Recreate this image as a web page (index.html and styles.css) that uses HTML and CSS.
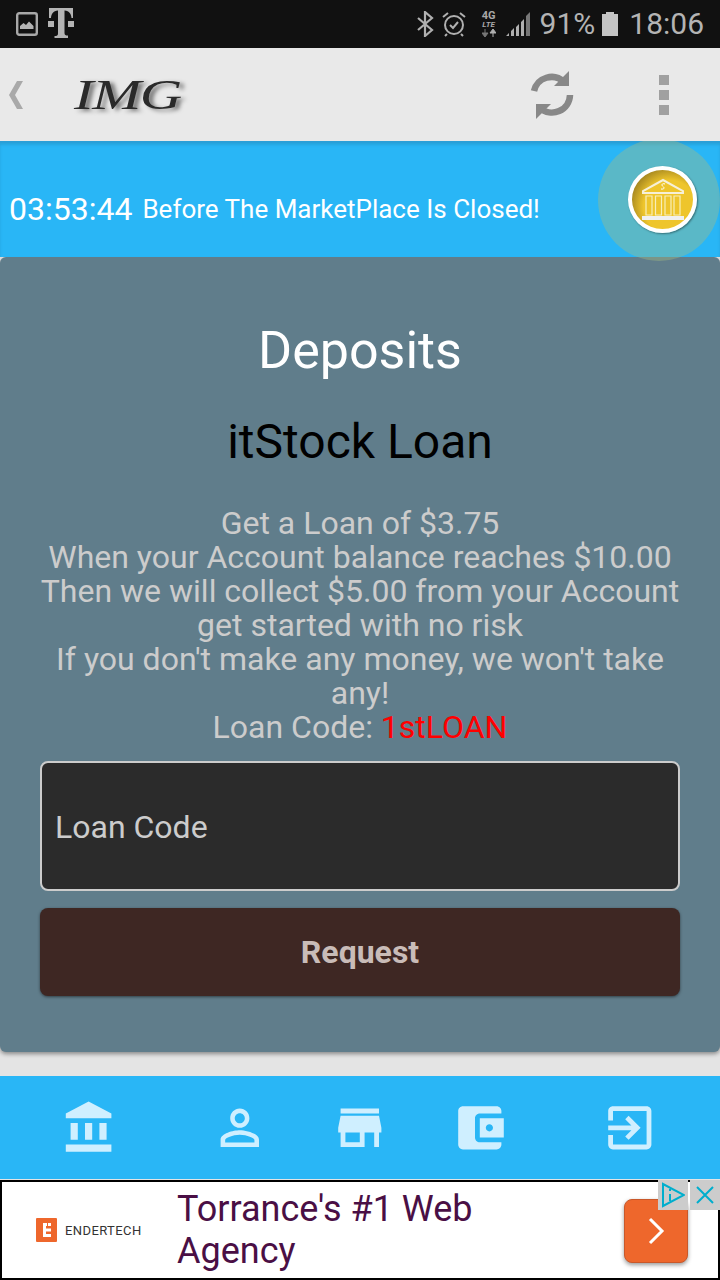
FILE: index.html
```html
<!DOCTYPE html>
<html lang="en">
<head>
    <meta charset="UTF-8">
    <meta name="viewport" content="width=device-width, initial-scale=1.0">
    <title>Deposits - itStock Loan</title>
    <link rel="stylesheet" href="styles.css">
</head>
<body>
    <div class="status-bar">
        <div class="status-left">
            <svg class="status-image" viewBox="0 0 22 24" width="22" height="24">
                <rect x="1.2" y="1.2" width="19.6" height="21.6" rx="2" fill="none" stroke="#a8a8a8" stroke-width="2.4"/>
                <path d="M4 17v-3l3.500-3 2.500 2 3-3.500 4.500 4.500v3z" fill="#b4b4b4"/>
            </svg>
            <svg class="status-t" viewBox="0 0 26 32" width="26" height="32">
                <path d="M1 1h24v10h-1.500c-.3-4-2-7-7-7.500v22.500c0 2 1 2.500 3.500 2.500v2.500H6.500V29c2.500 0 3.500-.5 3.500-2.500V3.500c-5 .5-6.700 3.500-7 7.500H1z" fill="#b4b4b4"/>
                <rect x="0" y="14" width="6" height="6" fill="#b4b4b4"/>
                <rect x="20" y="14" width="6" height="6" fill="#b4b4b4"/>
            </svg>
        </div>
        <div class="status-right">
            <svg viewBox="0 0 18 26" width="18" height="26">
                <path d="M2 7l14 12-7 6V1l7 6L2 19" fill="none" stroke="#b0b0b0" stroke-width="2.200"/>
            </svg>
            <svg class="status-alarm" viewBox="0 0 24 26" width="24" height="26">
                <circle cx="12" cy="14" r="9" fill="none" stroke="#b0b0b0" stroke-width="2"/>
                <path d="M8 14l3 3 5-6M1 6l5-4M23 6l-5-4M5 23l-2 2M19 23l2 2" fill="none" stroke="#b0b0b0" stroke-width="2"/>
            </svg>
            <div class="status-net">
                <span class="net-top">4G</span>
                <span class="net-mid">LTE</span>
                <svg viewBox="0 0 14 8" width="14" height="8">
                    <path d="M3 0v4M0 4h6L3 8z" fill="#777" stroke="#777" stroke-width="1"/>
                    <path d="M11 8V4M8 4h6l-3-4z" fill="#b0b0b0" stroke="#b0b0b0" stroke-width="1"/>
                </svg>
            </div>
            <svg class="status-signal" viewBox="0 0 24 24" width="24" height="24">
                <path d="M0 24h3v-3zM5 24h3v-8l-3 3zM10 24h3V12l-3 3zM15 24h3V7l-3 3z" fill="#b0b0b0"/>
                <path d="M20 24h4V0l-4 4z" fill="#777"/>
            </svg>
            <span class="status-text">91%</span>
            <svg class="status-battery" viewBox="0 0 16 24" width="16" height="24">
                <path d="M4 2V0h8v2h4v22H0V2z" fill="#c4c4c4"/>
            </svg>
            <span class="status-text status-time">18:06</span>
        </div>
    </div>

    <header class="app-bar">
        <svg class="back" viewBox="0 0 16 28" width="16" height="28">
            <path d="M9 0h6L7 14l8 14H9L1 14z" fill="#a9a9a9"/>
        </svg>
        <span class="logo">IMG</span>
        <svg class="refresh" viewBox="0 0 46 48" width="46" height="48">
            <path d="M5 20a18 18 0 0 1 30-9" fill="none" stroke="#888" stroke-width="6.500"/>
            <path d="M40 0v15H25z" fill="#888"/>
            <path d="M41 24a18 18 0 0 1-30 13" fill="none" stroke="#888" stroke-width="6.500"/>
            <path d="M7 48V33h15z" fill="#888"/>
        </svg>
        <div class="menu-dots">
            <span></span>
            <span></span>
            <span></span>
        </div>
    </header>

    <div class="ticker">
        <span class="ticker-time">03:53:44</span>
        <span class="ticker-text">Before The MarketPlace Is Closed!</span>
        <div class="ripple"></div>
        <div class="coin">
            <svg viewBox="0 0 44 44" width="44" height="44">
                <path d="M22 2L42 13v2H2v-2z" fill="#eec52c" stroke="#f6f0d8" stroke-width="2"/>
                <path d="M24 6c-3-1-4 1-2 2.500s1 3-2 2.500" fill="none" stroke="#fff" stroke-width="1"/>
                <path d="M5 18h6v19H5zM14.500 18h6v19h-6zM24 18h6v19h-6zM33 18h6v19h-6z" fill="#eec52c" stroke="#f8eeb8" stroke-width="1.200"/>
                <path d="M1 38h42v4H1z" fill="#f0f0f0"/>
            </svg>
        </div>
    </div>

    <main class="card">
        <h1>Deposits</h1>
        <h2>itStock Loan</h2>
        <p class="loan-info">
            Get a Loan of $3.75<br>
            When your Account balance reaches $10.00<br>
            Then we will collect $5.00 from your Account<br>
            get started with no risk<br>
            If you don't make any money, we won't take any!<br>
            Loan Code: <span class="code">1stLOAN</span>
        </p>
        <input class="code-input" type="text" placeholder="Loan Code">
        <button class="btn-request">Request</button>
    </main>

    <nav class="tabs">
        <div class="tab">
            <svg viewBox="0 0 24 24"><path d="M4 10v7h3v-7H4zm6 0v7h3v-7h-3zM2 22h19v-3H2v3zm14-12v7h3v-7h-3zm-4.500-9L2 6v2h19V6l-9.500-5z"/></svg>
        </div>
        <div class="tab">
            <svg viewBox="0 0 24 24"><path d="M12 5.900c1.160 0 2.100.94 2.100 2.100s-.94 2.100-2.100 2.100S9.900 9.160 9.900 8s.94-2.100 2.100-2.100m0 9c2.970 0 6.100 1.460 6.100 2.100v1.100H5.900V17c0-.64 3.130-2.100 6.100-2.100M12 4C9.790 4 8 5.790 8 8s1.790 4 4 4 4-1.790 4-4-1.790-4-4-4zm0 9c-2.670 0-8 1.340-8 4v3h16v-3c0-2.660-5.330-4-8-4z"/></svg>
        </div>
        <div class="tab">
            <svg viewBox="0 0 24 24"><path d="M20 4H4v2h16V4zm1 10v-2l-1-5H4l-1 5v2h1v6h10v-6h4v6h2v-6h1zm-9 4H6v-4h6v4z"/></svg>
        </div>
        <div class="tab">
            <svg viewBox="0 0 24 24"><path d="M21 18v1c0 1.100-.89 2-2 2H5c-1.110 0-2-.9-2-2V5c0-1.100.89-2 2-2h14c1.100 0 2 .9 2 2v1h-9c-1.110 0-2 .9-2 2v8c0 1.100.89 2 2 2h9zm-9-2h10V8H12v8zm4-2.500c-.83 0-1.500-.67-1.500-1.500s.67-1.500 1.500-1.500 1.500.67 1.500 1.500-.67 1.500-1.500 1.500z"/></svg>
        </div>
        <div class="tab">
            <svg viewBox="0 0 24 24"><path d="M10.090 15.590L11.500 17l5-5-5-5-1.410 1.410L12.670 11H3v2h9.670l-2.580 2.590zM19 3H5c-1.110 0-2 .9-2 2v4h2V5h14v14H5v-4H3v4c0 1.100.89 2 2 2h14c1.100 0 2-.9 2-2V5c0-1.100-.9-2-2-2z"/></svg>
        </div>
    </nav>

    <div class="ad">
        <div class="ad-brand">
            <svg viewBox="0 0 21 24" width="21" height="24">
                <rect width="21" height="24" rx="1" fill="#ee672c"/>
                <path d="M7 5h3v14H7zM10 5h1v3h-1zM12 5h3v3h-3zM10 10.500h5v3h-5zM10 16h5v3h-5z" fill="#fff"/>
            </svg>
            <span>ENDERTECH</span>
        </div>
        <div class="ad-headline">Torrance's #1 Web Agency</div>
        <div class="ad-go">
            <svg viewBox="0 0 18 28" width="18" height="28">
                <path d="M3 2l12 12L3 26" fill="none" stroke="#fff" stroke-width="3"/>
            </svg>
        </div>
        <div class="ad-controls">
            <div class="ad-control">
                <svg viewBox="0 0 24 26" width="24" height="26">
                    <path d="M2 2v22l21-11z" fill="none" stroke="#00aecd" stroke-width="2"/>
                    <path d="M9 12v7M9 7v2" stroke="#00aecd" stroke-width="2"/>
                </svg>
            </div>
            <div class="ad-control">
                <svg viewBox="0 0 20 20" width="20" height="20">
                    <path d="M2 2l16 16M18 2L2 18" stroke="#00aecd" stroke-width="2"/>
                </svg>
            </div>
        </div>
    </div>
</body>
</html>
```

FILE: styles.css
```css
* {
    box-sizing: border-box;
}
body {
    position: relative;
    width: 720px;
    height: 1280px;
    margin: 0;
    overflow: hidden;
    font-family: Roboto, "Liberation Sans", sans-serif;
    background-color: #e4e4e4;
}
.status-bar {
    display: flex;
    justify-content: space-between;
    align-items: center;
    height: 48px;
    padding: 0 16px;
    background-color: #111;
}
.status-left {
    display: flex;
    align-items: center;
    gap: 10px;
}
.status-t {
    margin-top: -2px;
}
.status-right {
    display: flex;
    align-items: center;
}
.status-alarm {
    margin-left: 8px;
}
.status-net {
    display: flex;
    flex-direction: column;
    align-items: center;
    width: 18px;
    margin-left: 14px;
    color: #a8a8a8;
    font-weight: 700;
    line-height: 9px;
}
.net-top {
    font-size: 11px;
}
.net-mid {
    font-size: 8px;
    font-style: italic;
}
.status-signal {
    margin-left: 8px;
}
.status-text {
    margin-left: 10px;
    color: #b4b4b4;
    font-size: 30px;
    line-height: 48px;
}
.status-battery {
    margin-left: 7px;
}
.status-time {
    margin-left: 11px;
}
.app-bar {
    position: relative;
    display: flex;
    align-items: center;
    height: 93px;
    padding-left: 8px;
    background-color: #e9e9e9;
    z-index: 3;
}
.back {
    flex-shrink: 0;
}
.logo {
    width: 84px;
    margin-left: 50px;
    color: #2a2a2a;
    font-family: "Liberation Serif", serif;
    font-size: 42px;
    font-style: italic;
    letter-spacing: -1px;
    text-shadow: 3px 2px 4px rgba(0, 0, 0, 0.5);
    transform: scaleX(1.4);
    transform-origin: left;
}
.refresh {
    flex-shrink: 0;
    margin-left: 371px;
}
.menu-dots {
    display: flex;
    flex-direction: column;
    gap: 5px;
    margin-left: 84px;
}
.menu-dots span {
    width: 10px;
    height: 10px;
    background-color: #a0a0a0;
}
.ticker {
    position: relative;
    display: flex;
    align-items: center;
    gap: 10px;
    height: 116px;
    padding: 18px 0 0 9px;
    border-top: 2px solid #2a9fd8;
    background-color: #29b6f6;
    box-shadow: inset 0 2px 3px rgba(0, 0, 0, 0.1);
    color: #fff;
}
.ticker-time {
    font-size: 32px;
}
.ticker-text {
    font-size: 26px;
}
.ripple {
    position: absolute;
    top: -4px;
    left: 598px;
    width: 122px;
    height: 122px;
    border-radius: 50%;
    background-color: rgba(166, 187, 131, 0.4);
    z-index: 2;
}
.coin {
    position: absolute;
    top: 23px;
    left: 628px;
    display: flex;
    justify-content: center;
    align-items: center;
    width: 69px;
    height: 67px;
    border: 4px solid #fff;
    border-radius: 50%;
    background: radial-gradient(circle at 62% 62%, #eec52c 50%, #a1831f 78%);
    box-shadow: 1px 1px 2px rgba(0, 0, 0, 0.4);
    z-index: 3;
}
.card {
    height: 795px;
    padding: 66px 40px 0;
    border-radius: 6px;
    background-color: #607d8b;
    box-shadow: 0 2px 4px rgba(0, 0, 0, 0.4);
    text-align: center;
}
h1 {
    margin: 0;
    color: #fff;
    font-size: 52px;
    font-weight: 400;
    line-height: 56px;
}
h2 {
    margin: 35px 0 0;
    color: #000;
    font-size: 48px;
    font-weight: 400;
    line-height: 56px;
}
.loan-info {
    margin: 36px 0 0;
    color: #ccc;
    font-size: 32px;
    line-height: 34px;
}
.code {
    color: #f00;
}
.code-input {
    display: block;
    width: 100%;
    height: 130px;
    margin-top: 17px;
    padding: 2px 13px 0;
    border: 2px solid #ccc;
    border-radius: 8px;
    background-color: #2b2b2b;
    color: #ccc;
    font-family: inherit;
    font-size: 32px;
}
.code-input::placeholder {
    color: #ccc;
    opacity: 1;
}
.btn-request {
    display: block;
    width: 100%;
    height: 88px;
    margin-top: 17px;
    padding-bottom: 2px;
    border: none;
    border-radius: 8px;
    background-color: #3e2723;
    box-shadow: 0 1px 3px rgba(0, 0, 0, 0.5);
    color: #c9bcb8;
    font-family: inherit;
    font-size: 32px;
    font-weight: 700;
}
.tabs {
    display: grid;
    grid-template-columns: 180px 120px 120px 120px 180px;
    height: 103px;
    margin-top: 24px;
    background-color: #29b6f6;
}
.tab {
    display: flex;
    justify-content: center;
    align-items: center;
}
.tab svg {
    width: 57.6px;
    height: 57.6px;
    fill: #cfefff;
}
.ad {
    position: relative;
    display: flex;
    align-items: center;
    height: 100px;
    margin-top: 1px;
    border: 2px solid #000;
    background-color: #fff;
}
.ad-brand {
    display: flex;
    align-items: center;
    gap: 8px;
    width: 175px;
    padding-left: 34px;
    color: #333;
    font-size: 13px;
    letter-spacing: 0.4px;
}
.ad-headline {
    width: 330px;
    color: #4a0f45;
    font-size: 36px;
    line-height: 42px;
}
.ad-go {
    display: flex;
    justify-content: center;
    align-items: center;
    width: 64px;
    height: 64px;
    margin: 2px 0 0 117px;
    border: 1px solid #c9582a;
    border-radius: 8px;
    background-color: #ee672c;
    box-shadow: 0 2px 4px rgba(0, 0, 0, 0.4);
}
.ad-controls {
    position: absolute;
    top: -2px;
    right: -2px;
    display: flex;
    gap: 2px;
}
.ad-control {
    display: flex;
    justify-content: center;
    align-items: center;
    width: 30px;
    height: 30px;
    background-color: #ccc;
}
```
